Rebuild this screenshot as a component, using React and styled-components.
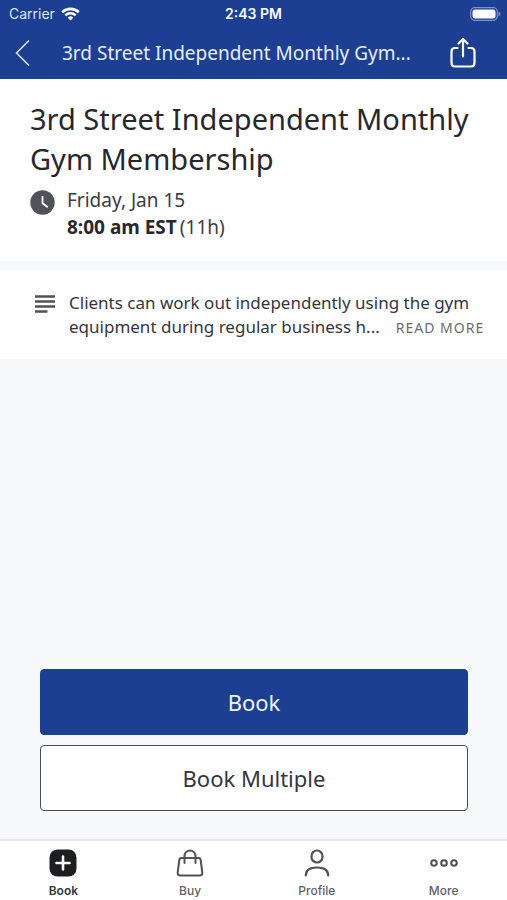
import React from "react";
import styled, { createGlobalStyle } from "styled-components";

const GlobalStyle = createGlobalStyle`
  *, *::before, *::after { box-sizing: border-box; }
  body {
    margin: 0;
    background: #f7f9fb;
    color: #27282c;
    font-family: "Noto Sans", "Open Sans", sans-serif;
  }
  button { font: inherit; color: inherit; cursor: pointer; }
  svg { display: block; flex: none; }
`;

const Screen = styled.div`
  display: flex;
  flex-direction: column;
  min-height: 100vh;
`;

const Header = styled.header`
  background: #1c3f94;
  color: #ffffff;
`;

const StatusBar = styled.div`
  display: grid;
  grid-template-columns: 1fr auto 1fr;
  align-items: center;
  height: 27px;
  padding: 0 6px;
  font: 500 14px/20px Inter, sans-serif;
`;

const Carrier = styled.span`
  display: flex;
  align-items: center;
  gap: 6px;
  padding-left: 3px;
  font-weight: 400;
  color: #dfe6f7;
`;

const Clock = styled.time`
  font-weight: 600;
`;

const Battery = styled.svg`
  justify-self: end;
`;

const NavBar = styled.div`
  display: flex;
  align-items: center;
  justify-content: space-between;
  height: 52px;
  padding: 0 24px 0 2px;
`;

const IconButton = styled.button`
  display: grid;
  place-items: center;
  width: 40px;
  height: 40px;
  padding: 0;
  border: 0;
  background: none;
`;

const NavTitle = styled.div`
  flex: 1;
  padding: 0 12px 0 20px;
  overflow: hidden;
  white-space: nowrap;
  font-size: 19px;
  line-height: 28px;
  color: #e8eefb;
`;

const Summary = styled.section`
  padding: 20px 30px;
  background: #ffffff;
`;

const Title = styled.h1`
  margin: 0 0 8px;
  font-size: 29px;
  font-weight: 400;
  line-height: 40px;
`;

const When = styled.div`
  display: flex;
  gap: 12px;
  font-size: 19px;
  line-height: 27px;
`;

const ClockIcon = styled.svg`
  margin-top: 3px;
`;

const Day = styled.div`
  color: #3c3d41;
`;

const Duration = styled.span`
  margin-left: 3px;
  color: #3c3d41;
`;

const Description = styled.section`
  display: flex;
  gap: 14px;
  margin-top: 9px;
  padding: 21px 16px 20px 35px;
  background: #ffffff;
`;

const LinesIcon = styled.svg`
  margin-top: 4px;
`;

const Text = styled.p`
  margin: 0;
  font-size: 17px;
  line-height: 24px;
  color: #35363a;
`;

const ReadMore = styled.button`
  margin-left: 16px;
  padding: 0;
  border: 0;
  background: none;
  && {
    font-size: 14px;
    line-height: 20px;
    letter-spacing: 1px;
    color: #6b6c70;
  }
`;

const Actions = styled.div`
  display: grid;
  gap: 10px;
  margin-top: auto;
  padding: 32px 39px 28px 40px;
`;

const ActionButton = styled.button`
  height: 66px;
  border: 1px solid ${(p) => (p.$primary ? "#1c3f94" : "#4b4c50")};
  border-radius: 4px;
  background: ${(p) => (p.$primary ? "#1c3f94" : "#ffffff")};
  && {
    font-size: 22px;
    color: ${(p) => (p.$primary ? "#f0f4fd" : "#35363a")};
  }
`;

const TabBar = styled.nav`
  display: grid;
  grid-template-columns: repeat(4, 1fr);
  border-top: 2px solid #e4e6e9;
  background: #ffffff;
`;

const Tab = styled.a`
  display: flex;
  flex-direction: column;
  align-items: center;
  gap: 5px;
  height: 59px;
  padding-top: 7px;
  font: ${(p) => (p.$active ? 600 : 500)} 12px/16px Inter, sans-serif;
  color: ${(p) => (p.$active ? "#35363a" : "#606166")};
  text-decoration: none;
`;

const BookIcon = () => (
  <svg width="30" height="30" viewBox="0 0 30 30">
    <rect x="1.5" y="1.5" width="27" height="27" rx="8" fill="#1d1e22" />
    <path d="M15 8.500v13M8.500 15h13" stroke="#fff" strokeWidth="2.6" strokeLinecap="round" />
  </svg>
);

const BuyIcon = () => (
  <svg width="30" height="30" viewBox="0 0 30 30" fill="none" stroke="#515257" strokeWidth="2" strokeLinecap="round" strokeLinejoin="round">
    <path d="M6.2 10h17.6q1.5 0 1.8 1.5l1.7 13q.3 3-2.6 3H5.3q-2.9 0-2.6-3l1.7-13Q4.700 10 6.200 10Z" />
    <path d="M9.500 15V8a5.500 5.500 0 0 1 11 0v7" />
  </svg>
);

const ProfileIcon = () => (
  <svg width="30" height="30" viewBox="0 0 30 30" fill="none" stroke="#515257" strokeWidth="2.2" strokeLinecap="round">
    <rect x="9.500" y="2.500" width="11" height="12" rx="5.500" />
    <path d="M3.800 27.500C3.800 22 7.500 19.500 15 19.500s11.200 2.500 11.200 8" />
  </svg>
);

const MoreIcon = () => (
  <svg width="30" height="30" viewBox="0 0 30 30" fill="none" stroke="#515257" strokeWidth="2">
    <circle cx="5" cy="15" r="2.800" />
    <circle cx="15" cy="15" r="2.800" />
    <circle cx="25" cy="15" r="2.800" />
  </svg>
);

const tabs = [
  { label: "Book", Icon: BookIcon, active: true },
  { label: "Buy", Icon: BuyIcon },
  { label: "Profile", Icon: ProfileIcon },
  { label: "More", Icon: MoreIcon },
];

export default function App() {
  return (
    <Screen>
      <GlobalStyle />
      <Header>
        <StatusBar>
          <Carrier>
            Carrier
            <svg width="19" height="14" viewBox="0 0 19 14" fill="none" stroke="#fff" strokeWidth="2.600">
              <path d="M1.200 5.200a12 12 0 0 1 16.600 0M4.300 8.400a7.500 7.500 0 0 1 10.400 0" />
              <path d="M9.500 13.500 6.700 10.700a4 4 0 0 1 5.600 0Z" fill="#fff" stroke="none" />
            </svg>
          </Carrier>
          <Clock>2:43 PM</Clock>
          <Battery width="31" height="14" viewBox="0 0 31 14">
            <rect x="0.700" y="0.700" width="26.600" height="12.600" rx="4" fill="none" stroke="#7f93c6" strokeWidth="1.200" />
            <rect x="2.500" y="2.500" width="23" height="9" rx="2.500" fill="#fff" />
            <path d="M28.600 4.500q1.800 .8 1.800 2.500t-1.800 2.500Z" fill="#7f93c6" />
          </Battery>
        </StatusBar>
        <NavBar>
          <IconButton aria-label="Back">
            <svg width="26" height="30" viewBox="0 0 26 30" fill="none" stroke="#dfe6f7" strokeWidth="1.500">
              <path d="M20 2.500 7.500 15 20 27.500" />
            </svg>
          </IconButton>
          <NavTitle>3rd Street Independent Monthly Gym...</NavTitle>
          <IconButton aria-label="Share">
            <svg width="28" height="32" viewBox="0 0 28 32" fill="none" stroke="#fff" strokeWidth="2.200" strokeLinecap="round" strokeLinejoin="round">
              <path d="M8.500 11H6q-3.500 0-3.500 3.500v11.500q0 3.500 3.500 3.500h16q3.500 0 3.500-3.500V14.500q0-3.500-3.500-3.500h-2.500" />
              <path d="M14 19.500V2.500M9.500 6.500 14 2l4.500 4.500" />
            </svg>
          </IconButton>
        </NavBar>
      </Header>

      <main>
        <Summary>
          <Title>3rd Street Independent Monthly Gym Membership</Title>
          <When>
            <ClockIcon width="25" height="25" viewBox="0 0 25 25">
              <circle cx="12.500" cy="12.500" r="12.200" fill="#515257" />
              <path d="M12.500 6v7.300l5.300 4" fill="none" stroke="#fff" strokeWidth="1.800" />
            </ClockIcon>
            <div>
              <Day>Friday, Jan 15</Day>
              <strong>8:00 am EST</strong>
              <Duration>(11h)</Duration>
            </div>
          </When>
        </Summary>

        <Description>
          <LinesIcon width="20" height="20" viewBox="0 0 20 20" stroke="#515257" strokeWidth="2.300">
            <path d="M0 1.500h20M0 6.500h20M0 11.500h20M0 16.500h12.500" />
          </LinesIcon>
          <Text>
            Clients can work out independently using the gym equipment during regular business h...
            <ReadMore>READ MORE</ReadMore>
          </Text>
        </Description>
      </main>

      <Actions>
        <ActionButton $primary>Book</ActionButton>
        <ActionButton>Book Multiple</ActionButton>
      </Actions>

      <TabBar>
        {tabs.map(({ label, Icon, active }) => (
          <Tab key={label} href={`#${label.toLowerCase()}`} $active={active} aria-current={active ? "page" : undefined}>
            <Icon />
            {label}
          </Tab>
        ))}
      </TabBar>
    </Screen>
  );
}
